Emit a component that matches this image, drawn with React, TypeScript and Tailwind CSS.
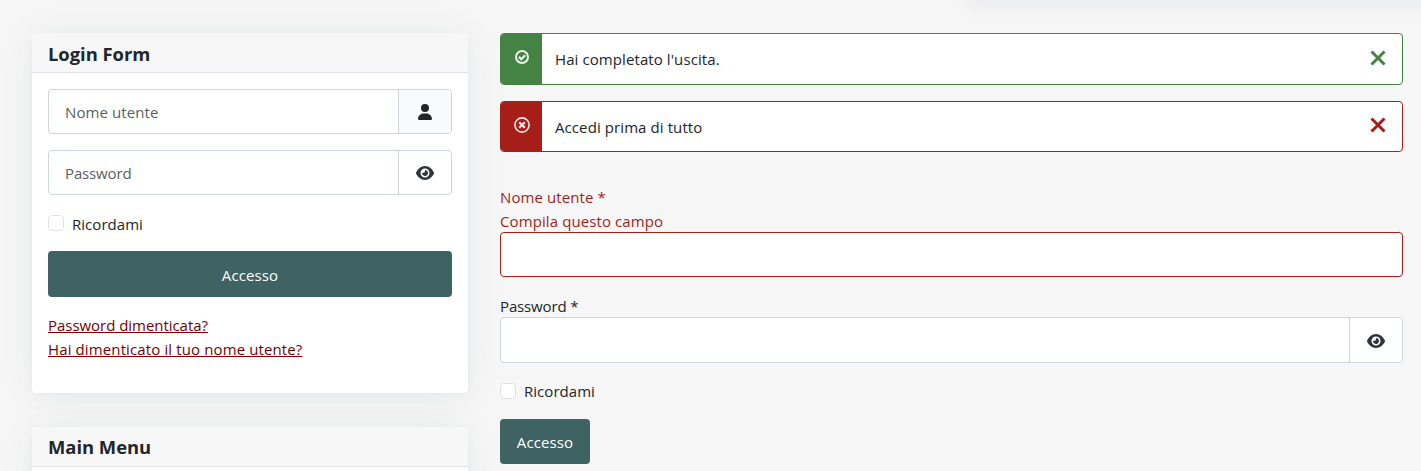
import type { ReactNode } from "react";
import { FaEye, FaUser } from "react-icons/fa6";
import clsx from "clsx";

function Card({ title, className, children }: { title: ReactNode; className?: string; children?: ReactNode }) {
  return (
    <section
      className={clsx(
        "overflow-hidden rounded bg-white shadow-[0_2px_3px_rgba(10,60,90,0.01),0_3px_14px_rgba(10,60,100,0.03),0_2px_40px_rgba(10,70,90,0.06)]",
        className,
      )}
    >
      <h3 className="h-10 border-b border-[#dfe3e7] bg-[#f7f7f7] px-4 text-[18.4px] font-bold tracking-[-0.02px]">
        {title}
      </h3>
      {children}
    </section>
  );
}

function Field({
  name,
  type = "text",
  placeholder,
  addon,
  addonClass,
  className,
}: {
  name: string;
  type?: string;
  placeholder?: string;
  addon?: ReactNode;
  addonClass?: string;
  className?: string;
}) {
  return (
    <div className={clsx("flex overflow-hidden rounded border bg-white", className)}>
      <input
        type={type}
        name={name}
        aria-label={name}
        placeholder={placeholder}
        className="min-w-0 flex-1 px-4 outline-none placeholder:text-[#5a5e63]"
      />
      {addon && (
        <span className={clsx("flex w-[53px] items-center justify-center border-l border-[#ced4da]", addonClass)}>
          {addon}
        </span>
      )}
    </div>
  );
}

function Remember({ boxClass }: { boxClass?: string }) {
  return (
    <label className="flex h-6 items-center gap-2">
      <input
        type="checkbox"
        className={clsx(
          "h-4 w-4 appearance-none rounded border border-[#dee2e6] bg-white checked:bg-[#3f6262]",
          boxClass,
        )}
      />
      <span className="tracking-[0.04px]">Ricordami</span>
    </label>
  );
}

function CloseIcon() {
  return (
    <svg aria-hidden viewBox="0 0 16 16" className="h-4 w-4" stroke="currentColor" strokeWidth="3" fill="none">
      <path d="M1.5 1.5 14.5 14.5M14.5 1.5 1.5 14.5" />
    </svg>
  );
}

function CheckCircle() {
  return (
    <svg aria-hidden viewBox="0 0 16 16" className="h-4 w-4" stroke="currentColor" strokeWidth="2" fill="none">
      <circle cx="8" cy="8" r="6" />
      <path d="m4.9 7.8 2.4 2.4 3.9-3.9" strokeWidth="2.3" />
    </svg>
  );
}

function TimesCircle() {
  return (
    <svg aria-hidden viewBox="0 0 16 16" className="h-4 w-4" stroke="currentColor" fill="none">
      <circle cx="8" cy="8" r="7.1" strokeWidth="1.6" />
      <path d="m5.2 5.2 5.6 5.6M10.8 5.2l-5.6 5.6" strokeWidth="2.2" />
    </svg>
  );
}

function Alert({ kind, className, children }: { kind: "success" | "danger"; className: string; children: ReactNode }) {
  const success = kind === "success";
  return (
    <div
      role="alert"
      className={clsx(
        "flex overflow-hidden rounded border bg-white",
        success ? "border-[#448344]" : "border-[#a51f18]",
        className,
      )}
    >
      <span
        className={clsx(
          "flex w-[41px] justify-center pt-[15px] text-white/90",
          success ? "bg-[#448344]" : "bg-[#a51f18]",
        )}
      >
        {success ? <CheckCircle /> : <TimesCircle />}
      </span>
      <p className="flex-1 pt-[13px] pl-[13px] tracking-[0.09px]">{children}</p>
      <button
        type="button"
        aria-label="Chiudi"
        className={clsx(
          "mr-4 flex items-start",
          success ? "pt-4 text-[#448344]" : "pt-[15px] text-[#a51f18]",
        )}
      >
        <CloseIcon />
      </button>
    </div>
  );
}

export default function App() {
  return (
    <div className="h-[471px] overflow-hidden bg-[#f6f6f6] font-['Open_Sans','Noto_Sans',sans-serif] text-[15px] leading-6 text-[#22262a]">
      {/* bottom shadow of the card above the fold */}
      <div className="-mt-2 -mr-10 ml-[968px] h-2 shadow-[0_2px_20px_rgba(10,30,80,0.12)]" />
      <div className="flex gap-8 pt-[33px] pr-[18px] pl-8">
        <aside className="w-[436px] shrink-0">
          <Card title={<span className="leading-[41px]">Login Form</span>} className="h-[360px]">
            <form className="px-4 pt-4">
              <Field
                name="Nome utente"
                placeholder="Nome utente"
                className="h-[45px] border-[#ced4da] tracking-[0.1px]"
                addonClass="bg-[#f9fafb]"
                addon={<FaUser className="h-4 w-4" />}
              />
              <Field
                name="Password"
                type="password"
                placeholder="Password"
                className="mt-4 mb-[17px] h-[45px] border-[#ced4da] tracking-[-0.14px]"
                addon={<FaEye className="h-4 w-[18px] text-[#2f353d]" />}
              />
              <Remember boxClass="-mt-0.5" />
              <button
                type="button"
                className="mt-[15px] h-[46px] w-full rounded bg-[#3f6262] pt-0.5 tracking-[0.1px] text-white"
              >
                Accesso
              </button>
              <ul className="mt-4 text-[#7a0000] underline">
                <li>
                  <a href="#" className="tracking-[-0.04px]">
                    Password dimenticata?
                  </a>
                </li>
                <li>
                  <a href="#" className="tracking-[0.12px]">
                    Hai dimenticato il tuo nome utente?
                  </a>
                </li>
              </ul>
            </form>
          </Card>
          <Card title={<span className="leading-[39px]">Main Menu</span>} className="mt-[34px] h-40" />
        </aside>

        <main className="min-w-0 flex-1">
          <Alert kind="success" className="h-[52px]">
            Hai completato l'uscita.
          </Alert>
          <Alert kind="danger" className="mt-4 h-[51px]">
            Accedi prima di tutto
          </Alert>

          <form className="pt-[33px]">
            <div className="h-[47px] tracking-[0.1px] text-[#a51f18]">
              <div>Nome utente *</div>
              <div>Compila questo campo</div>
            </div>
            <Field name="Nome utente" className="h-[45px] border-[#a51f18]" />
            <div className="mt-[17px] h-[23px] tracking-[-0.14px]">Password *</div>
            <Field
              name="Password"
              type="password"
              className="mb-4 h-[46px] border-[#ced4da]"
              addon={<FaEye className="mt-px h-4 w-[18px] text-[#2f353d]" />}
            />
            <Remember />
            <button
              type="button"
              className="mt-4 h-[45px] w-[90px] rounded bg-[#3f6262] pt-px tracking-[0.1px] text-white"
            >
              Accesso
            </button>
          </form>
        </main>
      </div>
    </div>
  );
}
